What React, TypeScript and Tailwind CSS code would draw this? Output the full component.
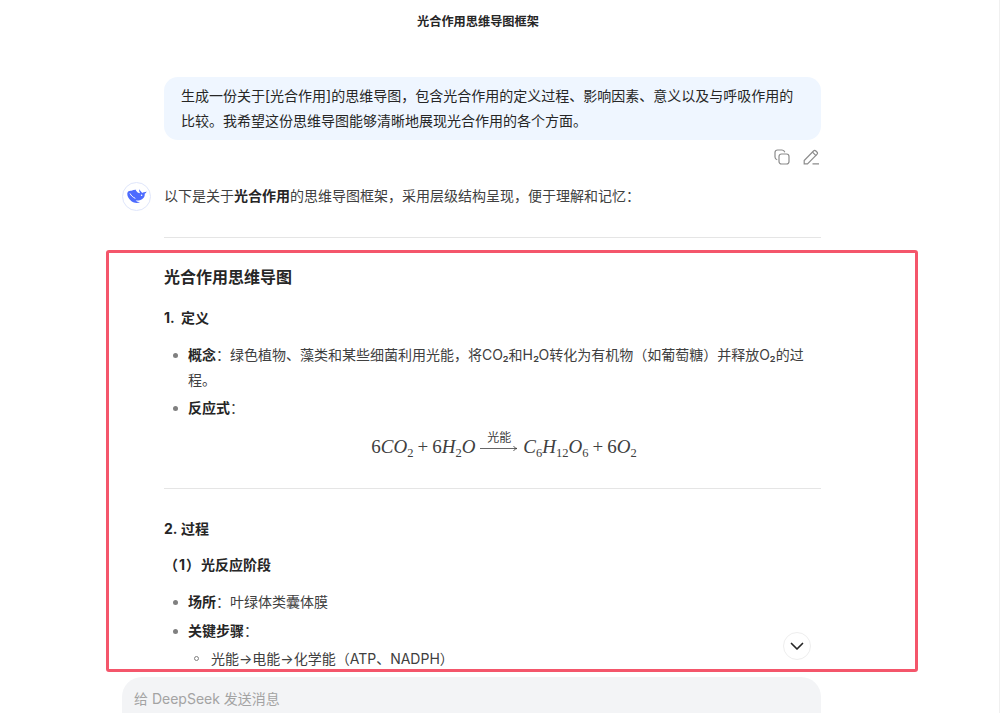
import React from "react";

const cjk = "font-['Inter','Noto_Sans_CJK_SC',sans-serif]";

const Sub: React.FC<{ children: React.ReactNode }> = ({ children }) => (
  <span className="relative top-[4px] text-[12.5px] not-italic leading-none">{children}</span>
);

const Bullet: React.FC<{ children: React.ReactNode; className?: string }> = ({ children, className }) => (
  <li className={"flex " + (className ?? "")}>
    <span className="w-[24px] shrink-0 flex justify-center pr-[1px] pt-[11px]">
      <span className="block w-[5px] h-[5px] rounded-full bg-[#808080]" />
    </span>
    <div className="flex-1">{children}</div>
  </li>
);

const Whale = () => (
  <svg width="20" height="15" viewBox="0 0 20 15">
    <path
      fill="#4d6bfe"
      d="M12.500 0.300C12 1.600 12.200 2.800 13 3.800L12.300 4.300C10.800 3.800 9.800 2.700 8.800 1.500L9.200 0.800C7.400 0.700 5.800 1.100 4.400 1.800C2.400 1.500 0.800 2.200 0.400 4C-0.200 6.800 1.600 10.200 4.500 12.200C7 14 10 14.400 13 13.300C11.200 13 9.800 12.400 8.600 11.400C10.800 11.800 13.200 11.600 15 10.300C17 9 18 7 17.700 4.800C18.500 4.300 19.300 3.500 19.700 2.400C18.900 2.900 18 3.200 17 3.200C16.200 3.200 15.600 3.500 15.100 4C14.800 2.900 13.200 2.300 12.500 0.300Z"
    />
    <path fill="none" stroke="#fff" strokeWidth="1" strokeLinecap="round" d="M3.200 4.800C4.200 6.800 5.800 8.200 8 9.200" />
    <circle cx="14.600" cy="6.300" r="0.800" fill="#fff" />
  </svg>
);

const App: React.FC = () => {
  return (
    <div className={"relative h-[713px] w-[1000px] overflow-hidden bg-white flex flex-col border-r border-[#f0f0f0] text-[14px] leading-[25px] text-[#404040] " + cjk}>
      <header className="h-[42px] w-[956px] shrink-0 flex items-center justify-center text-[12.2px] font-bold text-[#262626]">
        光合作用思维导图框架
      </header>

      <main className="flex-1 min-h-0 overflow-hidden pl-[122px] pr-[178px] pt-[35px]">
        <div className="ml-[42px]">
          <div className="bg-[#eff6ff] rounded-[14px] h-[63px] px-[17px] py-[7px] leading-[24.5px] text-[#262626]">
            生成一份关于[光合作用]的思维导图，包含光合作用的定义过程、影响因素、意义以及与呼吸作用的比较。我希望这份思维导图能够清晰地展现光合作用的各个方面。
          </div>

          <div className="flex justify-end gap-[13px] pt-[9px] h-[42px] text-[#8c8c8c]">
            <svg width="16" height="16" viewBox="0 0 16 16" fill="none" stroke="currentColor" strokeWidth="1.200">
              <rect x="5" y="5" width="10" height="10" rx="2.500" />
              <path d="M3.200 10.800C1.900 10.400 1 9.300 1 8V3.500C1 2.100 2.100 1 3.500 1H8c1.300 0 2.400.900 2.800 2.200" />
            </svg>
            <svg width="17" height="16" viewBox="0 0 17 16" fill="none" stroke="currentColor" strokeWidth="1.200" className="mr-px">
              <path d="M1.200 14.800V11.500L10.500 2a1.700 1.700 0 0 1 2.400 0l1 1a1.700 1.700 0 0 1 0 2.400L4.500 14.800z" />
              <path d="M9.500 3.200l3.700 3.700M9.500 14.800h6.500" />
            </svg>
          </div>
        </div>

        <div className="flex h-[55px] gap-[13px]">
          <div className="w-[29px] h-[29px] shrink-0 rounded-full border border-[#dfe6fb] bg-white flex items-center justify-center">
            <Whale />
          </div>
          <p className="pt-[1px]">
            以下是关于<b className="font-bold text-[#262626]">光合作用</b>的思维导图框架，采用层级结构呈现，便于理解和记忆：
          </p>
        </div>

        <div className="ml-[42px]">
          <hr className="border-[#e5e5e5]" />

          <h3 className="mt-[27px] text-[16px] font-bold leading-[25px] text-[#262626]">光合作用思维导图</h3>
          <h4 className="mt-[15px] font-bold text-[#262626]">
            <span className="inline-block w-[17px]">1.</span>定义
          </h4>

          <ul className="mt-[12px]">
            <Bullet>
              <b className="font-bold text-[#262626]">概念</b>：绿色植物、藻类和某些细菌利用光能，将CO₂和H₂O转化为有机物（如葡萄糖）并释放O₂的过程。
            </Bullet>
            <Bullet className="mt-[3px]">
              <b className="font-bold text-[#262626]">反应式</b>：
            </Bullet>
          </ul>

          <div className="mt-[6px] h-[40px] pl-[23px] flex items-center justify-center text-[19px] font-['Liberation_Serif',serif] text-[#404040]">
            <span>6<i>CO</i><Sub>2</Sub><span className="mx-[4px]">+</span>6<i>H</i><Sub>2</Sub><i>O</i></span>
            <span className="relative top-[-4px] mx-[5px] w-[38px] h-[22px] shrink-0 flex flex-col items-center">
              <span className={"text-[12px] leading-[14px] " + cjk}>光能</span>
              <svg width="38" height="7" viewBox="0 0 38 7" fill="none" stroke="#404040" strokeWidth="0.800">
                <path d="M0 3.500H37M33.500 1c.600 1.300 2 2.200 3.500 2.500-1.500.300-2.900 1.200-3.500 2.500" />
              </svg>
            </span>
            <span><i>C</i><Sub>6</Sub><i>H</i><Sub>12</Sub><i>O</i><Sub>6</Sub><span className="mx-[4px]">+</span>6<i>O</i><Sub>2</Sub></span>
          </div>

          <hr className="mt-[22px] border-[#e5e5e5]" />

          <h4 className="mt-[27px] font-bold text-[#262626]">
            <span className="inline-block w-[17px]">2.</span>过程
          </h4>
          <h5 className="mt-[11px] font-bold text-[#262626]">
            <span className="tracking-[1px]">（1）</span>光反应阶段
          </h5>

          <ul className="mt-[12px]">
            <Bullet>
              <b className="font-bold text-[#262626]">场所</b>：叶绿体类囊体膜
            </Bullet>
            <Bullet className="mt-[4px]">
              <b className="font-bold text-[#262626]">关键步骤</b>：
              <ul className="mt-[3px]">
                <li className="flex">
                  <span className="w-[24px] shrink-0 flex justify-center pr-[7px] pt-[10px]">
                    <span className="block w-[5px] h-[5px] rounded-full border border-[#808080]" />
                  </span>
                  <span className="-ml-px">光能→电能→化学能（ATP、NADPH）</span>
                </li>
              </ul>
            </Bullet>
          </ul>
        </div>
      </main>

      <footer className="h-[42px] shrink-0 pl-[122px] pt-[6px]">
        <div className="w-[699px] h-[60px] rounded-[20px] bg-[#f3f4f6] px-[12px] py-[9px] text-[#a3a3a3]">
          给 DeepSeek 发送消息
        </div>
      </footer>

      {/* highlight drawn over the screenshot */}
      <div className="absolute left-[106px] top-[250px] w-[812px] h-[422px] border-[3px] border-[#f4566b] rounded-[3px] pointer-events-none" />

      <button className="absolute left-[783px] top-[632px] w-[28px] h-[28px] rounded-full bg-white border border-[#eeeeee] flex items-center justify-center">
        <svg width="14" height="9" viewBox="0 0 14 9" fill="none" stroke="#262626" strokeWidth="1.700" strokeLinecap="round" strokeLinejoin="round">
          <path d="M1.500 1.500L7 7l5.500-5.500" />
        </svg>
      </button>
    </div>
  );
};

export default App;
